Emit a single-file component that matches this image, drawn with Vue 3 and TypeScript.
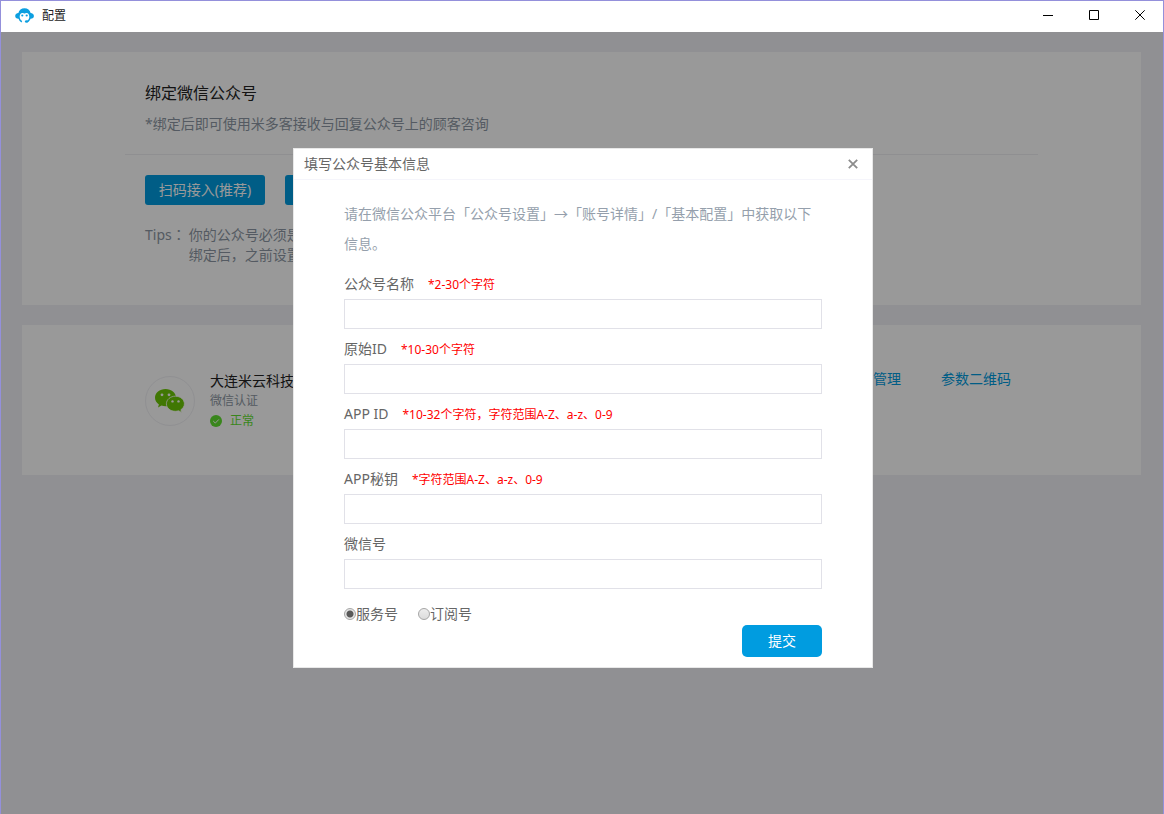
<script setup lang="ts">
import { reactive, ref } from 'vue'

interface Field {
  key: 'name' | 'originId' | 'appId' | 'secret' | 'wechat'
  label: string
  hint: string
}

const fields: Field[] = [
  { key: 'name', label: '公众号名称', hint: '*2-30个字符' },
  { key: 'originId', label: '原始ID', hint: '*10-30个字符' },
  { key: 'appId', label: 'APP ID', hint: '*10-32个字符，字符范围A-Z、a-z、0-9' },
  { key: 'secret', label: 'APP秘钥', hint: '*字符范围A-Z、a-z、0-9' },
  { key: 'wechat', label: '微信号', hint: '' },
]

const form = reactive({ name: '', originId: '', appId: '', secret: '', wechat: '' })
const accountType = ref('service')
const accountTypes = [
  { value: 'service', label: '服务号' },
  { value: 'subscription', label: '订阅号' },
]
const open = ref(true)
</script>

<template>
  <div class="window">
    <header class="titlebar">
      <svg class="logo" width="20" height="18" viewBox="0 0 20 18" aria-hidden="true">
        <path
          fill="#0c9fe0"
          d="M9.500 1.200C6.300 1.200 4.100 3 3.400 5.900C1.400 6 .200 7.200 .200 8.900S1.600 11.800 3.600 11.700C4.100 13.300 5.100 14.600 6.600 15.400L7.200 14C5.600 13 4.700 11.500 4.700 9.700C4.700 7.400 5.800 6 7.300 6C8.400 6 8.900 6.600 9.500 6.600S10.600 6 11.700 6C13.200 6 14.300 7.400 14.300 9.700C14.300 11.400 13.600 12.800 12.300 13.700L13 15C14.300 14.200 15.100 13.100 15.500 11.700C17.500 11.800 18.900 10.600 18.900 8.900S17.600 6 15.600 5.900C14.900 3 12.700 1.200 9.500 1.200Z"
        />
        <circle cx="7.300" cy="8.500" r="1.100" fill="#0c9fe0" />
        <circle cx="11.700" cy="8.500" r="1.100" fill="#0c9fe0" />
        <ellipse cx="11.600" cy="14.500" rx="1.700" ry="1.300" fill="#0c9fe0" />
      </svg>
      <h1 class="app-name">配置</h1>
      <div class="controls">
        <button type="button" aria-label="最小化">
          <svg width="11" height="11" viewBox="0 0 11 11"><path d="M0 5.500H10" stroke="#000" /></svg>
        </button>
        <button type="button" aria-label="最大化">
          <svg width="11" height="11" viewBox="0 0 11 11">
            <path d="M.5.5H9.500V9.500H.5Z" fill="none" stroke="#000" />
          </svg>
        </button>
        <button type="button" aria-label="关闭">
          <svg width="11" height="11" viewBox="0 0 11 11">
            <path d="M.3.3L9.700 9.700M9.700.3L.3 9.700" stroke="#000" />
          </svg>
        </button>
      </div>
    </header>

    <main class="page">
      <section class="card">
        <div class="inner">
          <div class="intro">
            <h2>绑定微信公众号</h2>
            <p>*绑定后即可使用米多客接收与回复公众号上的顾客咨询</p>
          </div>
          <div class="bind">
            <div class="actions">
              <button type="button" class="primary">扫码接入(推荐)</button>
              <button type="button" class="primary">手动接入</button>
            </div>
            <div class="tips">
              <span class="tips-label">Tips：</span>
              <div>
                <p>你的公众号必须是</p>
                <p>绑定后，之前设置</p>
              </div>
            </div>
          </div>
        </div>
      </section>

      <section class="card">
        <div class="inner account">
          <div class="avatar">
            <svg width="30" height="24" viewBox="0 0 30 24" aria-hidden="true">
              <path
                fill="#6cc705"
                d="M10.500 0C4.700 0 0 3.900 0 8.700C0 11.400 1.500 13.800 3.900 15.400L3 18.400L6.500 16.600C7.800 17 9.100 17.300 10.500 17.300C16.300 17.300 21 13.500 21 8.700S16.300 0 10.500 0Z"
              />
              <path
                fill="#6cc705"
                stroke="#fff"
                stroke-width=".8"
                d="M20.400 7.200C15.400 7.200 11.400 10.600 11.400 14.800S15.400 22.300 20.400 22.300C21.500 22.300 22.600 22.100 23.600 21.800L26.600 23.400L25.900 20.700C28.100 19.400 29.400 17.200 29.400 14.800C29.400 10.600 25.400 7.200 20.400 7.200Z"
              />
              <g fill="#fff">
                <circle cx="7" cy="5.800" r="1.400" />
                <circle cx="14" cy="5.800" r="1.400" />
                <circle cx="17.500" cy="12.400" r="1.200" />
                <circle cx="23.500" cy="12.400" r="1.200" />
              </g>
            </svg>
          </div>
          <div class="details">
            <h3>大连米云科技</h3>
            <p class="verify">微信认证</p>
            <p class="status">
              <svg width="12" height="12" viewBox="0 0 12 12" aria-hidden="true">
                <circle cx="6" cy="6" r="6" fill="#5fe02f" />
                <path d="M3.200 6L5.300 8.100L8.900 4.400" fill="none" stroke="#fff" />
              </svg>
              正常
            </p>
          </div>
          <nav class="links">
            <a href="#manage">管理</a>
            <a href="#qrcode">参数二维码</a>
          </nav>
        </div>
      </section>
      <div v-if="open" class="mask"></div>
    </main>

    <div v-if="open" class="layer">
      <div class="dialog" role="dialog" aria-labelledby="dialog-title">
        <header class="dialog-head">
          <h2 id="dialog-title">填写公众号基本信息</h2>
          <button type="button" class="close" aria-label="关闭" @click="open = false">
            <svg width="10" height="10" viewBox="0 0 10 10">
              <path d="M.8.8L9.200 9.200M9.200.8L.8 9.200" stroke="#8c8c8c" stroke-width="1.800" />
            </svg>
          </button>
        </header>
        <form class="form" @submit.prevent>
          <p class="guide">
            请在微信公众平台「公众号设置」→「账号详情」/「基本配置」中获取以下信息。
          </p>
          <div v-for="f in fields" :key="f.key" class="field">
            <label :for="f.key">
              {{ f.label }}<span v-if="f.hint" class="hint">{{ f.hint }}</span>
            </label>
            <input :id="f.key" v-model="form[f.key]" type="text" />
          </div>
          <div class="types">
            <label v-for="t in accountTypes" :key="t.value">
              <input v-model="accountType" type="radio" name="type" :value="t.value" />{{ t.label }}
            </label>
          </div>
          <button type="submit" class="submit">提交</button>
        </form>
      </div>
    </div>
  </div>
</template>

<style>
body {
  margin: 0;
}
</style>

<style scoped>
* {
  box-sizing: border-box;
  margin: 0;
  font-weight: 400;
}

.window {
  display: flex;
  flex-direction: column;
  min-height: 100vh;
  border: 1px solid #9490db;
  border-bottom: 0;
  background: #fff;
  color: #222;
  font-family: "Noto Sans", "Noto Sans CJK SC", sans-serif;
  font-size: 14px;
  line-height: 20px;
  text-spacing-trim: space-all;
}

button {
  padding: 0;
  border: 0;
  background: none;
  font: inherit;
}

.titlebar {
  display: flex;
  align-items: center;
  height: 31px;
  padding: 0 0 2px 14px;
}

.app-name {
  margin-left: 7px;
  font-size: 12px;
}

.controls {
  display: flex;
  margin-left: auto;
}

.controls button {
  display: grid;
  place-items: center;
  width: 46px;
  height: 29px;
}

.page {
  position: relative;
  flex: 1;
  display: flex;
  flex-direction: column;
  gap: 20px;
  padding: 20px 22px 20px 21px;
  background: #f0f1f5;
}

.mask {
  position: absolute;
  inset: 0;
  background: rgba(0, 0, 0, 0.4);
}

.card {
  background: #fff;
}

.inner {
  max-width: 913px;
  margin: 0 auto;
}

.intro {
  padding: 25px 20px 15px;
  border-bottom: 1px solid #eeeef2;
}

.intro h2 {
  font-size: 16px;
  line-height: 32px;
}

.intro p {
  color: #8d97a3;
  line-height: 30px;
}

.bind {
  padding: 20px 20px 40px;
}

.actions {
  display: flex;
  gap: 20px;
}

.primary {
  width: 120px;
  height: 30px;
  border-radius: 3px;
  background: #009ce0;
  color: #fff;
}

.tips {
  display: flex;
  gap: 3px;
  margin-top: 20px;
  color: #8d97a3;
}

.tips-label {
  font-family: "Noto Sans", "Noto Sans CJK TC", sans-serif;
}

.account {
  display: flex;
  align-items: center;
  min-height: 150px;
  padding: 2px 27px 0 20px;
}

.avatar {
  display: grid;
  place-items: center;
  width: 50px;
  height: 50px;
  border: 1px solid #f0f0f4;
  border-radius: 50%;
}

.details {
  margin-left: 15px;
}

.details h3 {
  font-size: 14px;
}

.details p {
  font-size: 12px;
}

.verify {
  color: #8d97a3;
}

.status {
  display: flex;
  align-items: center;
  gap: 8px;
  color: #5fe02f;
}

.links {
  display: flex;
  gap: 40px;
  align-self: flex-start;
  margin: 42px 0 0 auto;
}

.links a {
  color: #009ce0;
  text-decoration: none;
}

.layer {
  position: fixed;
  inset: 0;
  display: grid;
  place-items: center;
  padding: 2px 0 0 2px;
}

.dialog {
  width: 580px;
  border: 1px solid #e8e8e8;
  background: #fff;
  color: #666;
}

.dialog-head {
  display: flex;
  align-items: center;
  justify-content: space-between;
  height: 31px;
  padding: 0 14px 0 10px;
  border-bottom: 1px solid #f5f5fb;
}

.dialog-head h2 {
  font-size: 14px;
}

.close {
  display: grid;
  place-items: center;
}

.form {
  display: flex;
  flex-direction: column;
  padding: 19px 50px 10px;
}

.guide {
  margin-bottom: 10px;
  color: #959fac;
  line-height: 30px;
}

.field {
  margin-bottom: 5px;
}

.field label {
  display: block;
  height: 30px;
  line-height: 30px;
}

.hint {
  margin-left: 14px;
  color: #f00;
  font-size: 12px;
}

.field input {
  display: block;
  width: 100%;
  height: 30px;
  padding: 0 8px;
  border: 1px solid #e1e1e8;
  background: #fff;
  font: inherit;
}

.types {
  display: flex;
  gap: 20px;
  margin: 10px 0 1px;
}

.types label {
  display: flex;
  align-items: center;
}

.types input {
  appearance: none;
  width: 12px;
  height: 12px;
  border: 1px solid #a6a6a6;
  border-radius: 50%;
  background: linear-gradient(#ededed, #dcdcdc);
}

.types input:checked {
  background: radial-gradient(circle, #595959 0 3px, #e6e6e6 4px);
}

.submit {
  align-self: flex-end;
  width: 80px;
  height: 32px;
  border-radius: 5px;
  background: #009ce0;
  color: #fff;
}
</style>
